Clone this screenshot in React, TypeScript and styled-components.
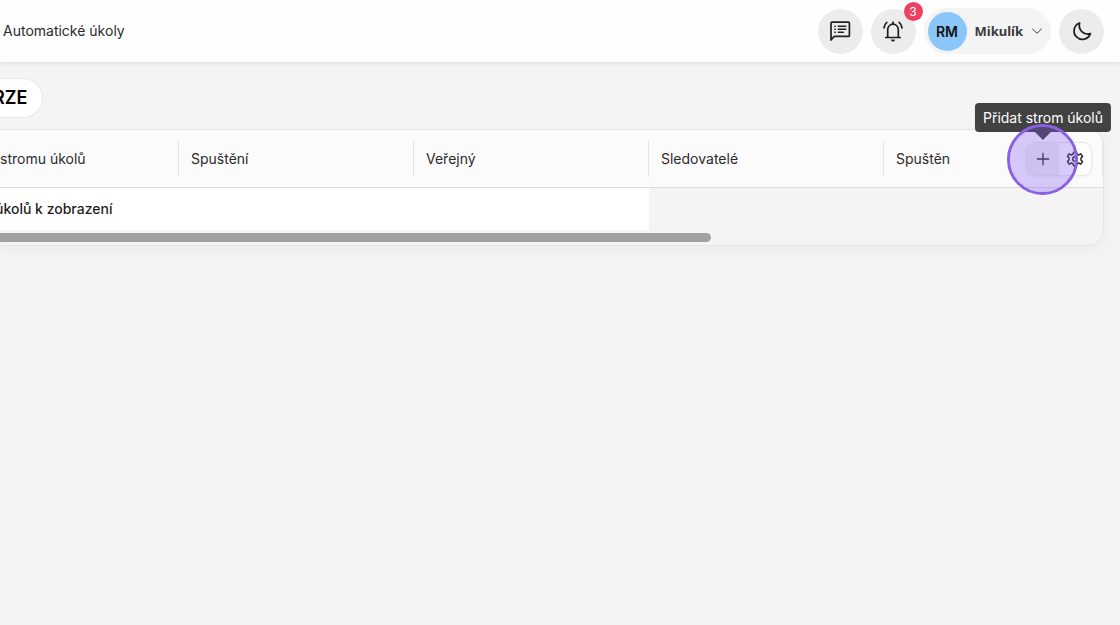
import React from "react";
import styled, { createGlobalStyle } from "styled-components";

const GlobalStyle = createGlobalStyle`
  *, *::before, *::after { box-sizing: border-box; }
  body {
    margin: 0;
    min-height: 100vh;
    overflow-x: hidden;
    background: #f4f4f4;
    color: #2b2b2b;
    font-family: Inter, "Liberation Sans", sans-serif;
    font-size: 14px;
    line-height: 20px;
  }
  button { font: inherit; color: inherit; border: 0; padding: 0; }
`;

const TopBar = styled.header`
  display: flex;
  align-items: center;
  justify-content: space-between;
  height: 62px;
  padding: 0 16px 0 3px;
  background: #fefefe;
  box-shadow: 0 1px 5px rgba(0, 0, 0, 0.1);
`;

const Title = styled.h1`
  margin: 0;
  font-size: 14px;
  font-weight: 400;
`;

const Actions = styled.div`
  display: flex;
  align-items: center;
  gap: 8px;
`;

const RoundButton = styled.button`
  position: relative;
  display: grid;
  place-items: center;
  width: 45px;
  height: 45px;
  border-radius: 50%;
  background: #ececec;
  color: #1f1f1f;
`;

const Badge = styled.span`
  position: absolute;
  top: -7px;
  right: -7px;
  width: 19px;
  height: 19px;
  border-radius: 50%;
  background: #ee4060;
  color: #fff;
  font-size: 12px;
  line-height: 19px;
  text-align: center;
`;

const UserButton = styled.button`
  display: flex;
  align-items: center;
  gap: 8px;
  height: 46px;
  padding: 0 8px 0 4px;
  border-radius: 23px;
  background: #f4f4f4;
  color: #3a3a3a;
`;

const Avatar = styled.span`
  width: 39px;
  height: 39px;
  border-radius: 50%;
  background: #8ac7f8;
  color: #111;
  font-weight: 600;
  line-height: 39px;
  text-align: center;
`;

const UserName = styled.span`
  font-family: "Noto Sans", "Open Sans", sans-serif;
  font-size: 13px;
  font-weight: 700;
`;

const Main = styled.main`
  padding: 16px 16px 24px 0;
`;

const Pill = styled.button`
  display: flex;
  align-items: center;
  height: 40px;
  margin-left: -20px;
  padding: 0 15px 0 12px;
  border: 1px solid #e6e6e6;
  border-radius: 20px;
  background: #fff;
  color: #000;
  font-size: 18px;
  font-weight: 600;
`;

const Panel = styled.section`
  margin-top: 11px;
  border: 1px solid #e6e6e6;
  border-left: 0;
  border-radius: 0 16px 16px 0;
  box-shadow: 0 4px 16px rgba(0, 0, 0, 0.04);
`;

const Table = styled.table`
  width: 100%;
  table-layout: fixed;
  border-collapse: separate;
  border-spacing: 0;
`;

const Column = styled.col<{ $width?: number }>`
  width: ${(p) => (p.$width ? `${p.$width}px` : "auto")};
`;

const HeadCell = styled.th`
  height: 58px;
  padding: 0;
  border-bottom: 1px solid #dcdcdc;
  background: #fbfbfb;
  font-weight: 400;
  text-align: left;
  white-space: nowrap;
  &:last-child { border-top-right-radius: 15px; }
`;

const HeadContent = styled.div<{ $first?: boolean }>`
  display: flex;
  align-items: center;
  justify-content: space-between;
  height: 36px;
  padding: 0 10px 0 ${(p) => (p.$first ? 0 : 12)}px;
  border-right: 1px solid #e4e4e4;
`;

const EmptyCell = styled.td`
  height: 42px;
  padding: 0;
  background: #fff;
  color: #1f1f1f;
  font-weight: 500;
`;

const EmptyText = styled.span`
  display: block;
  margin-left: -5px;
`;

const ScrollTrack = styled.div`
  padding: 3px 0;
`;

const ScrollThumb = styled.div`
  width: 64.5%;
  height: 9px;
  border-radius: 0 5px 5px 0;
  background: #a1a1a1;
`;

const Tools = styled.div`
  display: flex;
  height: 34px;
  border: 1px solid #e8e8e8;
  border-radius: 9px;
  background: #fff;
  box-shadow: 0 1px 3px rgba(0, 0, 0, 0.06);
`;

const ToolButton = styled.button<{ $active?: boolean }>`
  position: relative;
  display: grid;
  place-items: center;
  width: 32px;
  border-radius: ${(p) => (p.$active ? "8px 0 0 8px" : "0 8px 8px 0")};
  background: ${(p) => (p.$active ? "#f1f1f1" : "transparent")};
`;

const Tooltip = styled.span`
  position: absolute;
  z-index: 1;
  bottom: 43px;
  left: 50%;
  width: max-content;
  height: 29px;
  padding: 0 8px;
  border-radius: 4px;
  background: #424242;
  color: #fff;
  line-height: 29px;
  transform: translateX(-50%);
  &::after {
    content: "";
    position: absolute;
    top: 100%;
    left: 50%;
    margin-left: -8px;
    border: 8px solid transparent;
    border-top-color: #424242;
    border-bottom: 0;
  }
`;

const ClickRing = styled.span`
  position: absolute;
  z-index: 2;
  top: 50%;
  left: 50%;
  width: 71px;
  height: 71px;
  margin: -35px 0 0 -36px;
  border: 3px solid #8a60e4;
  border-radius: 50%;
  background: rgba(127, 82, 246, 0.3);
  background-clip: padding-box;
  pointer-events: none;
`;

const Line = ({ size, width = 2, children }: { size: number; width?: number; children: React.ReactNode }) => (
  <svg width={size} height={size} viewBox="0 0 24 24" fill="none" stroke="currentColor"
    strokeWidth={width} strokeLinecap="round" strokeLinejoin="round" aria-hidden="true">
    {children}
  </svg>
);

const NotesIcon = () => (
  <Line size={24}>
    <path d="M3 21V4.2c0-.6.4-1 1-1h16.4c.6 0 1 .4 1 1v12.2c0 .6-.4 1-1 1H6.2z" strokeWidth="1.7" />
    <path d="M10.3 7.3h7.5M10.3 10.3h7.5M10.3 13.3h5" strokeWidth="1.5" />
    <path d="M6.9 7.3h.3M6.9 10.3h.3M6.9 13.3h.3" strokeWidth="1.6" />
  </Line>
);

const BellIcon = () => (
  <Line size={24} width={1.7}>
    <path d="M4.8 18.5h14.4M6.7 18.3V10.5a5.3 5.3 0 0 1 10.6 0v7.8M12 3.2v1.6" />
    <path d="M3 8.8c.2-2.2 1.2-4.1 2.8-5.5M21 8.8c-.2-2.2-1.2-4.1-2.8-5.5" />
    <path d="M10.7 21h2.6c-.2.7-.6 1-1.3 1s-1.1-.3-1.3-1z" strokeWidth="1.2" fill="currentColor" />
  </Line>
);

const MoonIcon = () => (
  <Line size={24} width={1.8}>
    <path d="M9.6 4a8.4 8.4 0 1 0 10.8 10.6A8.6 8.6 0 0 1 9.6 4z" />
  </Line>
);

const ChevronIcon = () => (
  <Line size={12}>
    <path d="M3 8l9 8.5L21 8" />
  </Line>
);

const PlusIcon = () => (
  <Line size={16}>
    <path d="M12 3.5v17M3.5 12h17" />
  </Line>
);

const GearIcon = () => (
  <Line size={18}>
    <path d="M10.2 3h3.6l.8 2.6 2 1.1 3.2-1.6 2.2 3.4-2 2.2v2.6l2 2.2-2.2 3.4-3.2-1.6-2 1.1-.8 2.6h-3.6l-.8-2.6-2-1.1-3.2 1.6L2 15.5l2-2.2v-2.6L2 8.5l2.2-3.4 3.2 1.6 2-1.1z" />
    <circle cx="12" cy="12" r="3" />
  </Line>
);

const columns = ["stromu úkolů", "Spuštění", "Veřejný", "Sledovatelé", "Spuštěn"];

export default function App() {
  return (
    <>
      <GlobalStyle />
      <TopBar>
        <Title>Automatické úkoly</Title>
        <Actions>
          <RoundButton aria-label="Zprávy"><NotesIcon /></RoundButton>
          <RoundButton aria-label="Oznámení"><BellIcon /><Badge>3</Badge></RoundButton>
          <UserButton>
            <Avatar>RM</Avatar>
            <UserName>Mikulík</UserName>
            <ChevronIcon />
          </UserButton>
          <RoundButton aria-label="Tmavý režim"><MoonIcon /></RoundButton>
        </Actions>
      </TopBar>
      <Main>
        <Pill>RZE</Pill>
        <Panel>
          <Table>
            <colgroup>
              <Column $width={179} />
              <Column $width={235} />
              <Column $width={235} />
              <Column $width={235} />
              <Column />
            </colgroup>
            <thead>
              <tr>
                {columns.map((name, i) => (
                  <HeadCell key={name} scope="col">
                    <HeadContent $first={i === 0}>
                      {name}
                      {i === columns.length - 1 && (
                        <Tools>
                          <ToolButton $active aria-label="Přidat strom úkolů">
                            <PlusIcon />
                            <Tooltip role="tooltip">Přidat strom úkolů</Tooltip>
                            <ClickRing />
                          </ToolButton>
                          <ToolButton aria-label="Nastavení"><GearIcon /></ToolButton>
                        </Tools>
                      )}
                    </HeadContent>
                  </HeadCell>
                ))}
              </tr>
            </thead>
            <tbody>
              <tr>
                <EmptyCell colSpan={3}><EmptyText>úkolů k zobrazení</EmptyText></EmptyCell>
              </tr>
            </tbody>
          </Table>
          <ScrollTrack><ScrollThumb /></ScrollTrack>
        </Panel>
      </Main>
    </>
  );
}
